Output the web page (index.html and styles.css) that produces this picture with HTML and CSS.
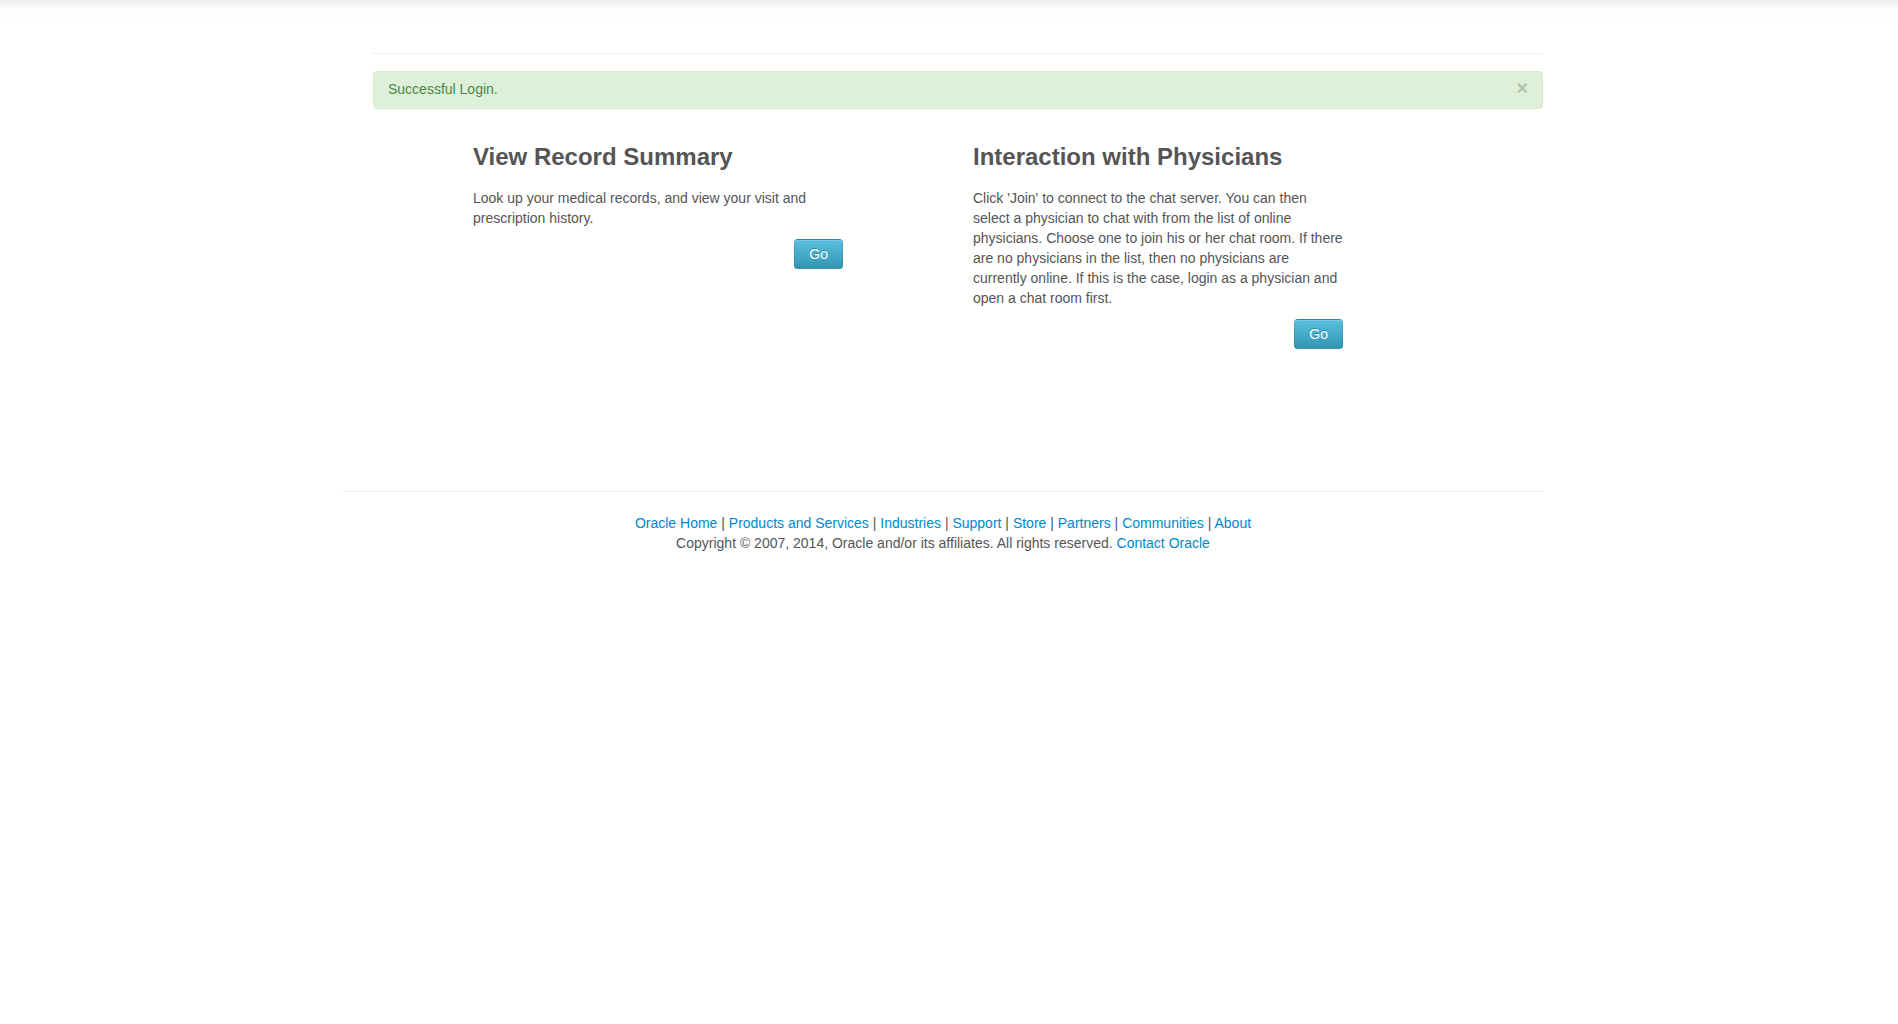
FILE: index.html
```html
<!DOCTYPE html>
<html lang="en">
<head>
<meta charset="utf-8">
<title>Medical Records</title>
<link rel="stylesheet" href="styles.css">
</head>
<body>
<div class="topshade"></div>
<div class="page">
  <div class="container">
    <hr class="top-rule">
    <div class="alert">
      <button class="close" type="button">&times;</button>
      Successful Login.
    </div>
    <div class="row">
      <div class="col">
        <h3>View Record Summary</h3>
        <p>Look up your medical records, and view your visit and prescription history.</p>
        <div class="actions"><a class="btn" href="#">Go</a></div>
      </div>
      <div class="col">
        <h3>Interaction with Physicians</h3>
        <p>Click 'Join' to connect to the chat server. You can then select a physician to chat with from the list of online physicians. Choose one to join his or her chat room. If there are no physicians in the list, then no physicians are currently online. If this is the case, login as a physician and open a chat room first.</p>
        <div class="actions"><a class="btn" href="#">Go</a></div>
      </div>
    </div>
    <footer class="footer">
      <hr class="foot-rule">
      <div class="links">
        <a href="#">Oracle Home</a> | <a href="#">Products and Services</a> | <a href="#">Industries</a> | <a href="#">Support</a> | <a href="#">Store</a> | <a href="#">Partners</a> | <a href="#">Communities</a> | <a href="#">About</a>
      </div>
      <div class="copy">Copyright &copy; 2007, 2014, Oracle and/or its affiliates. All rights reserved. <a href="#">Contact Oracle</a></div>
    </footer>
  </div>
</div>
</body>
</html>
```

FILE: styles.css
```css
html, body {
  margin: 0;
  padding: 0;
  background: #fff;
}
body {
  font-family: "Liberation Sans", Arial, sans-serif;
  font-size: 14px;
  line-height: 20px;
  color: #555;
}
a {
  color: #0088cc;
  text-decoration: none;
}
.topshade {
  height: 22px;
  background: linear-gradient(to bottom, #ececec 0px, #f8f8f8 6px, #fdfdfd 9px, #fdfdfd 20px, #fff 22px);
}
.page {
  padding-left: 18px;
}
.container {
  width: 1170px;
  margin: 0 auto;
}
.top-rule {
  margin: 31px 0 0;
  border: 0;
  border-top: 1px solid #eee;
  border-bottom: 1px solid #fff;
  height: 0;
}
.alert {
  margin-top: 16px;
  margin-bottom: 20px;
  padding: 7px 35px 9px 14px;
  background: #dff0d8;
  border: 1px solid #d6e9c6;
  border-radius: 4px;
  color: #468847;
}
.close {
  float: right;
  position: relative;
  top: -1px;
  right: -21px;
  padding: 0;
  border: 0;
  background: transparent;
  font-family: "Liberation Sans", Arial, sans-serif;
  font-size: 20px;
  font-weight: bold;
  line-height: 20px;
  color: #000;
  opacity: 0.2;
  text-shadow: 0 1px 0 #fff;
  cursor: pointer;
}
.row {
  display: flex;
  gap: 130px;
  padding-left: 100px;
  padding-bottom: 142px;
}
.col {
  width: 370px;
}
h3 {
  margin: 8px 0 11px;
  font-size: 24px;
  line-height: 40px;
  font-weight: bold;
  color: #555;
}
p {
  margin: 0 0 11px;
}
.actions {
  display: flex;
  justify-content: flex-end;
}
.btn {
  display: inline-block;
  padding: 4px 14px;
  font-size: 14px;
  line-height: 20px;
  color: #fff;
  text-shadow: 0 -1px 0 rgba(0,0,0,0.25);
  background: linear-gradient(to bottom, #5bc0de, #2f96b4);
  border: 1px solid rgba(0,0,0,0.1);
  border-bottom-color: rgba(0,0,0,0.25);
  border-radius: 4px;
  box-shadow: inset 0 1px 0 rgba(255,255,255,0.2), 0 1px 2px rgba(0,0,0,0.05);
}
.footer {
  margin-left: -30px;
  text-align: center;
}
.foot-rule {
  margin: 0 0 20px;
  border: 0;
  border-top: 1px solid #eee;
  border-bottom: 1px solid #fff;
  height: 0;
}
```
